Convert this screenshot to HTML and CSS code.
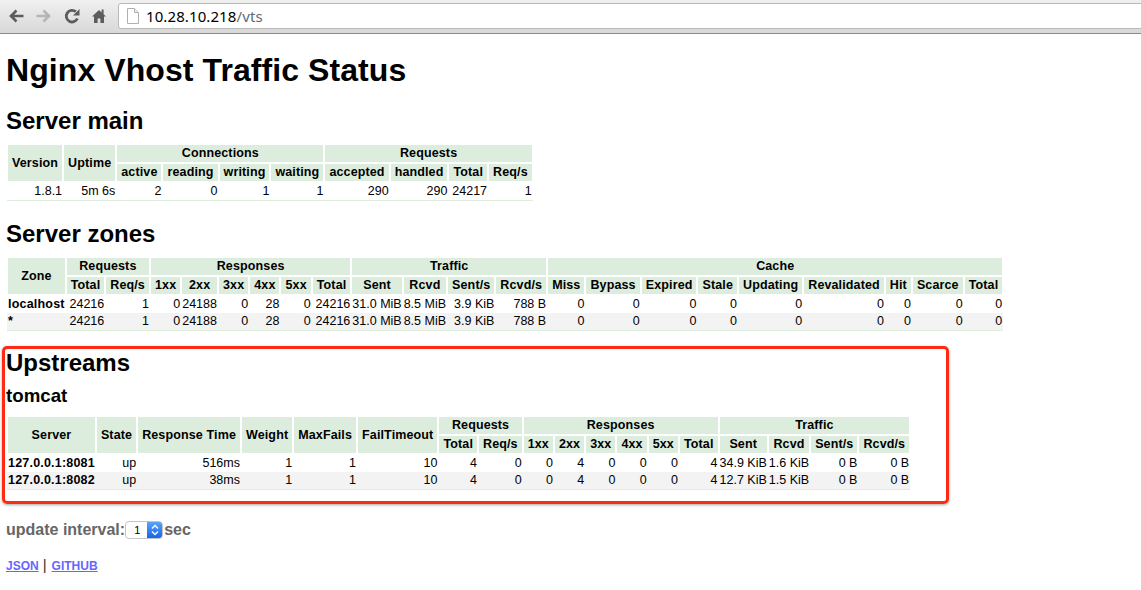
FILE: index.html
```html
<!DOCTYPE html>
<html lang="en">
<head>
<meta charset="utf-8">
<title>Nginx Vhost Traffic Status</title>
<link rel="stylesheet" href="styles.css">
</head>
<body>
<header class="toolbar">
  <svg class="icon" width="16" height="16" viewBox="0 0 16 16"><path d="M15.500 8H3M8.500 2.500 3 8l5.500 5.500" fill="none" stroke="#5c5c5c" stroke-width="2.600"/></svg>
  <svg class="icon" width="16" height="16" viewBox="0 0 16 16"><path d="M.5 8H13M7.500 2.500 13 8l-5.500 5.500" fill="none" stroke="#b4b4b4" stroke-width="2.600"/></svg>
  <svg class="icon" width="16" height="16" viewBox="0 0 16 16"><path d="M13.400 10.500A5.800 5.800 0 1 1 11.800 3.700" fill="none" stroke="#5c5c5c" stroke-width="2.800"/><path d="M9 7.400H15.500V.9z" fill="#5c5c5c"/></svg>
  <svg class="icon" width="14" height="16" viewBox="0 0 14 16"><path d="M7 2 0 8.600h2V15h3.600v-4.400h2.800V15H12V8.600h2L11.600 6.300V1.600H9.600v2.800z" fill="#5c5c5c"/></svg>
  <div class="address">
    <svg class="page" width="12" height="16" viewBox="0 0 12 16"><path d="M.5.5h7l4 4v11H.5z" fill="#fff" stroke="#b0b0b0"/><path d="M7.500.5v4h4" fill="#eee" stroke="#b0b0b0"/></svg>
    <span class="host">10.28.10.218</span><span class="path">/vts</span>
  </div>
</header>
<main class="content">
  <h1>Nginx Vhost Traffic Status</h1>

  <h2>Server main</h2>
  <table>
    <thead>
      <tr><th rowspan="2">Version</th><th rowspan="2">Uptime</th><th colspan="4">Connections</th><th colspan="4">Requests</th></tr>
      <tr><th>active</th><th>reading</th><th>writing</th><th>waiting</th><th>accepted</th><th>handled</th><th>Total</th><th>Req/s</th></tr>
    </thead>
    <tbody>
      <tr><td>1.8.1</td><td>5m 6s</td><td>2</td><td>0</td><td>1</td><td>1</td><td>290</td><td>290</td><td>24217</td><td>1</td></tr>
    </tbody>
  </table>

  <h2 class="next">Server zones</h2>
  <table>
    <thead>
      <tr><th rowspan="2">Zone</th><th colspan="2">Requests</th><th colspan="6">Responses</th><th colspan="4">Traffic</th><th colspan="9">Cache</th></tr>
      <tr><th>Total</th><th>Req/s</th><th>1xx</th><th>2xx</th><th>3xx</th><th>4xx</th><th>5xx</th><th>Total</th><th>Sent</th><th>Rcvd</th><th>Sent/s</th><th>Rcvd/s</th><th>Miss</th><th>Bypass</th><th>Expired</th><th>Stale</th><th>Updating</th><th>Revalidated</th><th>Hit</th><th>Scarce</th><th>Total</th></tr>
    </thead>
    <tbody>
      <tr><td class="name">localhost</td><td>24216</td><td>1</td><td>0</td><td>24188</td><td>0</td><td>28</td><td>0</td><td>24216</td><td>31.0 MiB</td><td>8.5 MiB</td><td>3.9 KiB</td><td>788 B</td><td>0</td><td>0</td><td>0</td><td>0</td><td>0</td><td>0</td><td>0</td><td>0</td><td>0</td></tr>
      <tr><td class="name">*</td><td>24216</td><td>1</td><td>0</td><td>24188</td><td>0</td><td>28</td><td>0</td><td>24216</td><td>31.0 MiB</td><td>8.5 MiB</td><td>3.9 KiB</td><td>788 B</td><td>0</td><td>0</td><td>0</td><td>0</td><td>0</td><td>0</td><td>0</td><td>0</td><td>0</td></tr>
    </tbody>
  </table>

  <section class="upstreams">
    <h2>Upstreams</h2>
    <h3>tomcat</h3>
    <table>
      <thead>
        <tr><th rowspan="2">Server</th><th rowspan="2">State</th><th rowspan="2">Response Time</th><th rowspan="2">Weight</th><th rowspan="2">MaxFails</th><th rowspan="2">FailTimeout</th><th colspan="2">Requests</th><th colspan="6">Responses</th><th colspan="4">Traffic</th></tr>
        <tr><th>Total</th><th>Req/s</th><th>1xx</th><th>2xx</th><th>3xx</th><th>4xx</th><th>5xx</th><th>Total</th><th>Sent</th><th>Rcvd</th><th>Sent/s</th><th>Rcvd/s</th></tr>
      </thead>
      <tbody>
        <tr><td class="name">127.0.0.1:8081</td><td>up</td><td>516ms</td><td>1</td><td>1</td><td>10</td><td>4</td><td>0</td><td>0</td><td>4</td><td>0</td><td>0</td><td>0</td><td>4</td><td>34.9 KiB</td><td>1.6 KiB</td><td>0 B</td><td>0 B</td></tr>
        <tr><td class="name">127.0.0.1:8082</td><td>up</td><td>38ms</td><td>1</td><td>1</td><td>10</td><td>4</td><td>0</td><td>0</td><td>4</td><td>0</td><td>0</td><td>0</td><td>4</td><td>12.7 KiB</td><td>1.5 KiB</td><td>0 B</td><td>0 B</td></tr>
      </tbody>
    </table>
    <div class="highlight"></div>
  </section>

  <div class="interval">update interval:<span class="select"><span class="value">1</span><span class="stepper"><svg width="8" height="12" viewBox="0 0 8 12"><path d="M1 4.500 4 1.500l3 3M1 7.500l3 3 3-3" fill="none" stroke="#fff" stroke-width="1.300"/></svg></span></span>sec</div>
  <div class="links"><a href="#json">JSON</a><span class="sep">|</span><a href="#github">GITHUB</a></div>
</main>
</body>
</html>
```
FILE: styles.css
```css
* { box-sizing: border-box; }
html, body { margin: 0; padding: 0; }
body {
  width: 1141px;
  height: 590px;
  overflow: hidden;
  background: #fff;
  color: #000;
  font-family: "Liberation Sans", Arial, sans-serif;
}
.toolbar {
  height: 34px;
  display: flex;
  align-items: center;
  gap: 12px;
  padding: 0 0 1px 8px;
  background: linear-gradient(#f0f0f0, #d8d8d8);
  border-bottom: 1px solid #8c8c8c;
}
.icon { flex: none; }
.address {
  flex: 1;
  height: 26px;
  margin-right: -10px;
  display: flex;
  align-items: center;
  padding-left: 8px;
  background: #fff;
  border: 1px solid #b9b9b9;
  border-radius: 3px;
  font-family: "Noto Sans", sans-serif;
  font-size: 15px;
  letter-spacing: .1px;
}
.page { margin-right: 7px; }
.host { color: #000; }
.path { color: #5d6a78; }
.content { padding: 0 6px; }
h1 { margin: 18px 0 0; font-size: 32px; line-height: 37px; letter-spacing: .08px; }
h2 { margin: 18px 0 9px; font-size: 24px; line-height: 28px; }
h2.next { margin-top: 19px; }
h3 { margin: 8px 0 9px; font-size: 18.72px; line-height: 22px; }
table {
  margin-left: 1px;
  border-collapse: separate;
  border-spacing: 0;
  font-size: 12.500px;
  line-height: 15px;
  border-bottom: 1px solid #ddeedd;
}
th {
  padding: 1px 4px;
  background: #ddeddd;
  border: 1px solid #fff;
  font-weight: bold;
  letter-spacing: .13px;
  white-space: nowrap;
}
td {
  padding: 1px 1px;
  text-align: right;
  white-space: nowrap;
}
tbody tr:first-child td { padding-top: 2px; }
tbody tr:nth-child(even) { background: #f3f3f3; }
td.name { text-align: left; font-weight: bold; letter-spacing: .2px; }
.upstreams { position: relative; margin-top: 18px; }
.upstreams h2 { margin: 0; }
.highlight {
  position: absolute;
  left: -4px;
  top: -3px;
  width: 947px;
  height: 158px;
  border: 3px solid #ff2a14;
  border-radius: 5px;
  box-shadow: 0 1px 3px rgba(0,0,0,.35);
}
.interval {
  margin-top: 30px;
  display: flex;
  align-items: center;
  font-size: 16px;
  line-height: 20px;
  font-weight: bold;
  color: #666;
}
.select {
  width: 38px;
  height: 18px;
  display: flex;
  margin: 0 1px 0 0;
  background: #fff;
  border: 1px solid #c4c4c4;
  border-radius: 4px;
  overflow: hidden;
  font-size: 11px;
  font-weight: normal;
  color: #000;
}
.value { flex: 1; padding-left: 8px; line-height: 16px; }
.stepper {
  width: 15px;
  display: flex;
  align-items: center;
  justify-content: center;
  background: linear-gradient(#5da2f8, #1466ee);
}
.links { margin-top: 17px; display: flex; align-items: baseline; font-size: 12px; font-weight: bold; line-height: 16px; }
.links a { color: #6666ff; }
.sep { margin: 0 5px 0 4px; font-weight: normal; font-size: 15px; color: #333; }
```
